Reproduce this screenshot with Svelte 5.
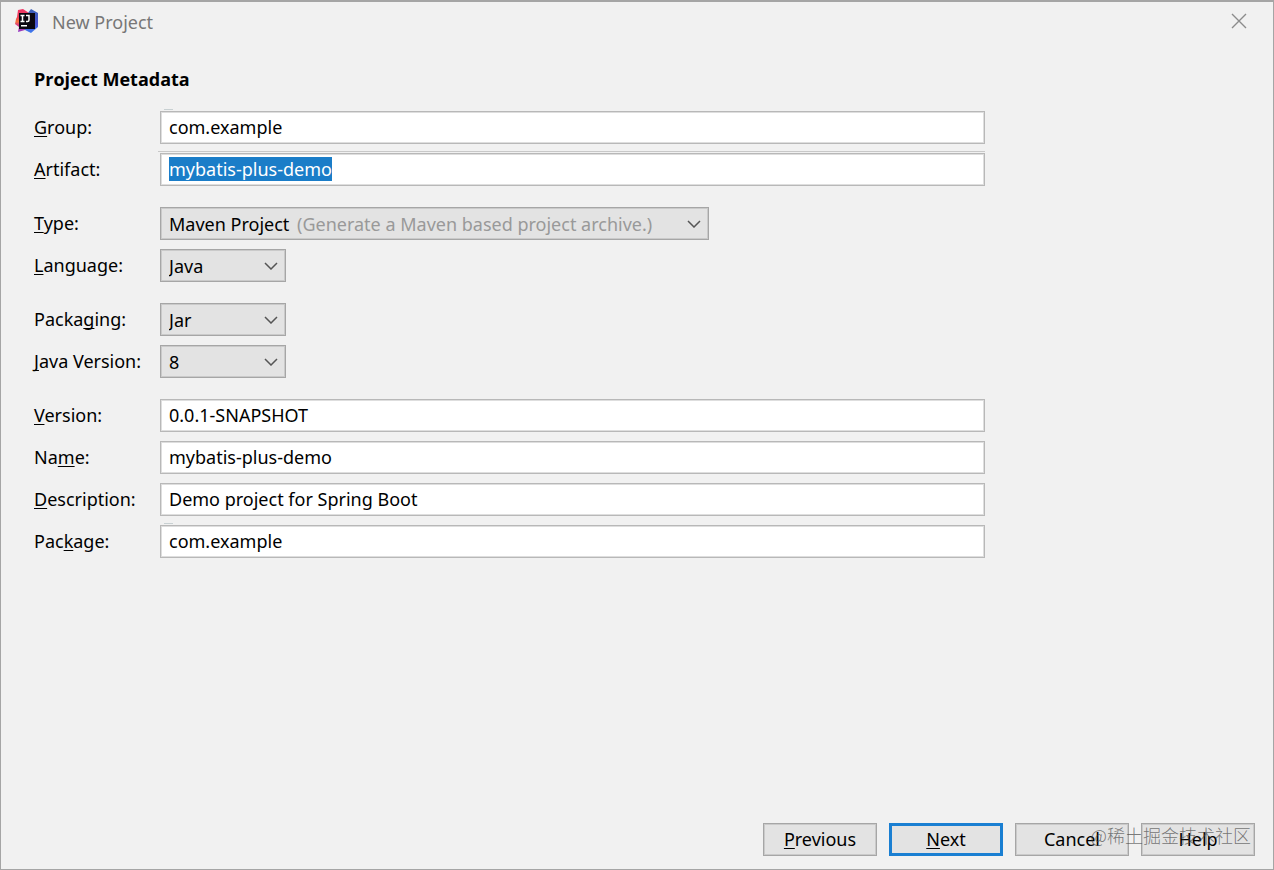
<script>
  import { onMount } from 'svelte';

  // key is the position of the underlined mnemonic letter
  const groups = [
    [
      { id: 'group', label: 'Group:', key: 0, value: 'com.example', mark: 'dash' },
      { id: 'artifact', label: 'Artifact:', key: 0, value: 'mybatis-plus-demo', mark: 'line' }
    ],
    [
      {
        id: 'type',
        label: 'Type:',
        key: 0,
        options: ['Maven Project', 'Gradle Project'],
        hint: '(Generate a Maven based project archive.)'
      },
      { id: 'language', label: 'Language:', key: 0, options: ['Java', 'Kotlin', 'Groovy'] }
    ],
    [
      { id: 'packaging', label: 'Packaging:', key: 5, options: ['Jar', 'War'] },
      { id: 'java-version', label: 'Java Version:', key: 0, options: ['8', '11', '17'] }
    ],
    [
      { id: 'version', label: 'Version:', key: 0, value: '0.0.1-SNAPSHOT' },
      { id: 'name', label: 'Name:', key: 2, value: 'mybatis-plus-demo' },
      { id: 'description', label: 'Description:', key: 0, value: 'Demo project for Spring Boot' },
      { id: 'package', label: 'Package:', key: 3, value: 'com.example', mark: 'dash' }
    ]
  ];

  onMount(() => {
    const artifact = document.getElementById('artifact');
    artifact.focus();
    artifact.select();
  });
</script>

<main class="dialog">
  <header class="titlebar">
    <svg class="logo" viewBox="0 0 24 24" aria-hidden="true">
      <defs>
        <linearGradient id="warm" x1="0" y1="0" x2="0" y2="1">
          <stop offset="0" stop-color="#ee3465" />
          <stop offset="0.35" stop-color="#f0405a" />
          <stop offset="0.55" stop-color="#f5753c" />
          <stop offset="0.7" stop-color="#d83a86" />
          <stop offset="1" stop-color="#8b38c8" />
        </linearGradient>
        <linearGradient id="cool" x1="0" y1="0" x2="0" y2="1">
          <stop offset="0" stop-color="#3b62b8" />
          <stop offset="0.6" stop-color="#4a52d0" />
          <stop offset="1" stop-color="#3d7df0" />
        </linearGradient>
      </defs>
      <path d="M3 1 L8 0 L14 4 L14 20 L10 21 L3 23 L4 18 L0 15 L1 10 L2 8 Z" fill="url(#warm)" />
      <path d="M13 4 L16 0 L23 4 L23 18 L16 24 L10 21 L10 18 Z" fill="url(#cool)" />
      <rect x="4" y="4" width="16" height="16" fill="#0b0710" />
      <path d="M5.5 6.5h4M7.5 6.5v6M5.5 12.5h4M11 6.5h3v4.5q0 1.5-1.5 1.5H11M6 16.8h6" fill="none" stroke="#fff" stroke-width="1.5" />
    </svg>
    <h1>New Project</h1>
    <button class="close" type="button" aria-label="Close">
      <svg viewBox="0 0 16 16" aria-hidden="true">
        <path d="M1 1 15 15M15 1 1 15" fill="none" stroke="#8c8c8c" stroke-width="1.4" />
      </svg>
    </button>
  </header>

  <form class="content">
    <h2>Project Metadata</h2>
    {#each groups as rows}
      <div class="group">
        {#each rows as row}
          <div class="row">
            <label for={row.id}>{row.label.slice(0, row.key)}<u>{row.label[row.key]}</u>{row.label.slice(row.key + 1)}</label>
            {#if row.options}
              <div class="combo" class:wide={row.hint}>
                <select id={row.id}>
                  {#each row.options as option}
                    <option>{option}</option>
                  {/each}
                </select>
                {#if row.hint}
                  <div class="hint">{row.hint}</div>
                {/if}
                <svg class="arrow" viewBox="0 0 14 8" aria-hidden="true">
                  <path d="M1 1 7 7 13 1" fill="none" stroke="#555" stroke-width="1.5" />
                </svg>
              </div>
            {:else}
              <div class="field {row.mark ?? ''}">
                <input id={row.id} type="text" value={row.value} spellcheck="false" autocomplete="off" />
              </div>
            {/if}
          </div>
        {/each}
      </div>
    {/each}
  </form>

  <footer class="buttons">
    <button type="button"><u>P</u>revious</button>
    <button type="button" class="default"><u>N</u>ext</button>
    <button type="button">Cancel</button>
    <button type="button">Help</button>
    <span class="watermark">@稀土掘金技术社区</span>
  </footer>
</main>

<style>
  :global(body) {
    margin: 0;
    background: #f1f1f1;
  }

  .dialog {
    display: flex;
    flex-direction: column;
    box-sizing: border-box;
    min-height: 100vh;
    border: 1px solid #a5a5a5;
    border-top-width: 2px;
    background: #f1f1f1;
    color: #000;
    font: 18px/26px "Noto Sans", "Noto Sans CJK SC", sans-serif;
  }

  .titlebar {
    display: flex;
    align-items: center;
    height: 38px;
    padding: 0 26px 0 14px;
  }

  .logo {
    width: 24px;
    height: 24px;
  }

  h1 {
    flex: 1;
    margin: 0 0 0 13px;
    padding-top: 2px;
    color: #777;
    font-size: 18px;
    font-weight: 400;
  }

  .close {
    display: flex;
    padding: 0;
    border: 0;
    background: none;
  }

  .close svg {
    width: 16px;
    height: 16px;
  }

  .content {
    display: flex;
    flex-direction: column;
    gap: 21px;
    padding: 26px 33px;
  }

  h2 {
    margin: 0 0 -2px;
    font-family: "Open Sans", sans-serif;
    font-size: 18px;
    font-weight: 700;
  }

  .group {
    display: flex;
    flex-direction: column;
    gap: 9px;
  }

  .row {
    display: grid;
    grid-template-columns: 126px minmax(0, 825px);
    align-items: center;
  }

  label {
    padding-bottom: 2px;
    white-space: nowrap;
  }

  u {
    text-decoration-thickness: 1px;
    text-underline-offset: 2px;
    text-decoration-skip-ink: none;
  }

  .field,
  .combo {
    position: relative;
  }

  input,
  select {
    display: block;
    box-sizing: border-box;
    width: 100%;
    height: 33px;
    margin: 0;
    padding: 0 8px 2px;
    border: 1px solid #b8b8b8;
    border-radius: 0;
    outline: none;
    background: #fff;
    box-shadow: inset 0 0 0 1px #dedede;
    color: #000;
    font: inherit;
  }

  input::selection {
    background: #1a7dc8;
    color: #fff;
  }

  select {
    padding-bottom: 0;
    appearance: none;
    border-color: #a6a6a6;
    background: #e3e3e3;
    box-shadow: inset 0 0 0 1px #cacaca;
  }

  .combo {
    width: 126px;
  }

  .combo.wide {
    width: 549px;
    max-width: 100%;
  }

  .hint {
    position: absolute;
    top: 4px;
    left: 137px;
    color: #999;
    white-space: nowrap;
    pointer-events: none;
  }

  .arrow {
    position: absolute;
    top: 13px;
    right: 8px;
    width: 14px;
    height: 8px;
    pointer-events: none;
  }

  /* thin repaint marks above some of the fields */
  .dash::before,
  .line::before {
    content: "";
    position: absolute;
    top: -2px;
    left: 4px;
    width: 9px;
    height: 1px;
    background: #c8d0d2;
  }

  .line::before {
    left: -2px;
    width: auto;
    right: 0;
    background: #c8c8c8;
  }

  .buttons {
    position: relative;
    display: flex;
    justify-content: flex-end;
    gap: 12px;
    margin-top: auto;
    padding: 0 18px 13px;
  }

  .buttons button {
    width: 114px;
    height: 33px;
    padding: 0 0 2px;
    border: 1px solid #a6a6a6;
    background: #e3e3e3;
    box-shadow: inset 0 0 0 1px #cacaca;
    color: #000;
    font: inherit;
  }

  .buttons .default {
    border: 3px solid #1a7fd2;
    box-shadow: none;
  }

  .watermark {
    position: absolute;
    top: 0;
    right: 22px;
    color: rgba(70, 70, 70, 0.7);
    font-family: "Noto Sans CJK SC", sans-serif;
    font-weight: 300;
    line-height: 24px;
    pointer-events: none;
  }
</style>
